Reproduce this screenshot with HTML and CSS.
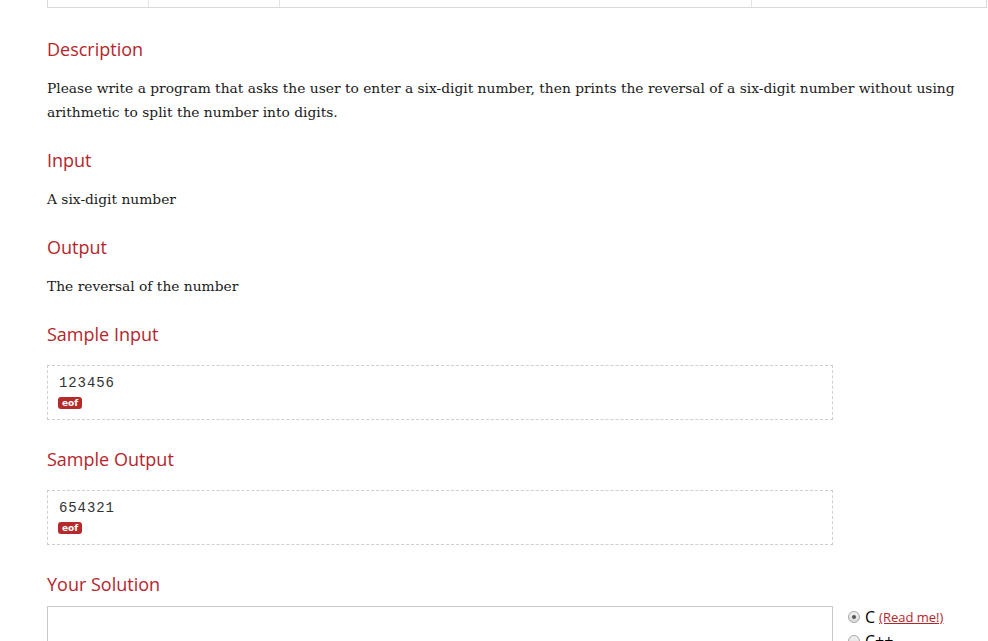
FILE: index.html
```html
<!DOCTYPE html>
<html>
<head>
<meta charset="utf-8">
<link rel="stylesheet" href="styles.css">
</head>
<body>
<div class="page">
  <div class="info-table">
    <div class="cell c1"></div>
    <div class="cell c2"></div>
    <div class="cell c3"></div>
    <div class="cell c4"></div>
  </div>

  <h2 class="head first">Description</h2>
  <p class="text">Please write a program that asks the user to enter a six-digit number, then prints the reversal of a six-digit number without using arithmetic to split the number into digits.</p>

  <h2 class="head">Input</h2>
  <p class="text">A six-digit number</p>

  <h2 class="head">Output</h2>
  <p class="text">The reversal of the number</p>

  <h2 class="head">Sample Input</h2>
  <div class="sample"><pre class="code">123456</pre><span class="eof">eof</span></div>

  <h2 class="head after-box">Sample Output</h2>
  <div class="sample"><pre class="code">654321</pre><span class="eof">eof</span></div>

  <h2 class="head after-box">Your Solution</h2>
  <div class="solution">
    <div class="editor"></div>
    <div class="langs">
      <label class="lang"><span class="radio checked"></span><span class="lname">C</span><a class="readme" href="#">(Read me!)</a></label>
      <label class="lang"><span class="radio"></span><span class="lname">C++</span></label>
    </div>
  </div>
</div>
</body>
</html>
```

FILE: styles.css
```css
html, body {
  margin: 0;
  padding: 0;
  background: #fff;
  overflow: hidden;
  height: 641px;
}
.page {
  padding: 0 0 0 47px;
  width: 940px;
}
.info-table {
  display: flex;
  height: 8px;
  border: 1px solid #dadada;
  border-top: none;
  margin-top: -1px;
}
.cell {
  border-right: 1px solid #e4e4e4;
}
.c1 { width: 100px; }
.c2 { width: 130px; }
.c3 { width: 471px; }
.c4 { flex: 1; border-right: none; }

.head {
  font-family: "Open Sans", "DejaVu Sans", sans-serif;
  font-weight: normal;
  font-size: 18px;
  color: #b5262b;
  margin: 24px 0 0;
  line-height: 24px;
}
.head.first { margin-top: 29px; }
.head.after-box { margin-top: 27px; }
.text {
  font-family: "DejaVu Serif", "Liberation Serif", serif;
  font-size: 13.8px;
  line-height: 24px;
  color: #1a1a1a;
  margin: 15px 0 0;
}
.sample {
  box-sizing: border-box;
  width: 786px;
  height: 55px;
  border: 1px dashed #cfcfcf;
  margin-top: 19px;
  padding: 9px 10px 0 10px;
  display: flex;
  flex-direction: column;
  align-items: flex-start;
}
.code {
  margin: 0 0 0 1px;
  font-family: "Liberation Mono", monospace;
  font-size: 14px;
  line-height: 16px;
  color: #333;
  letter-spacing: 0.9px;
}
.eof {
  display: block;
  background: #b52a2a;
  color: #fff;
  font-family: "DejaVu Sans", sans-serif;
  font-weight: bold;
  font-size: 9px;
  line-height: 12px;
  padding: 0 4px;
  border-radius: 3px;
  margin-top: 6px;
}
.solution {
  display: flex;
  margin-top: 10px;
}
.editor {
  box-sizing: border-box;
  width: 786px;
  height: 200px;
  border: 1px solid #c8c8c8;
}
.langs {
  margin-left: 15px;
  padding-top: 2px;
  display: flex;
  flex-direction: column;
  gap: 6px;
}
.lang {
  display: flex;
  align-items: center;
  font-family: "Open Sans", sans-serif;
  font-size: 16px;
  line-height: 18px;
  color: #000;
}
.radio {
  box-sizing: border-box;
  width: 12px;
  height: 12px;
  border-radius: 50%;
  border: 1px solid #a8a8a8;
  background: linear-gradient(#f2f2f2, #dadada);
  margin-right: 5px;
  position: relative;
}
.radio.checked::after {
  content: "";
  position: absolute;
  left: 3px;
  top: 3px;
  width: 4px;
  height: 4px;
  border-radius: 50%;
  background: #555;
}
.readme {
  font-size: 13px;
  color: #b5262b;
  margin-left: 4px;
}
```
